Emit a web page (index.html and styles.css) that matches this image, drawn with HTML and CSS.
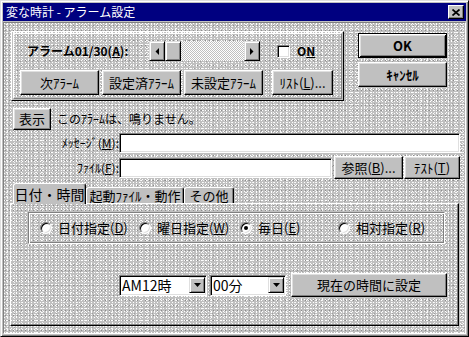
FILE: index.html
```html
<!DOCTYPE html>
<html lang="ja">
<head>
    <meta charset="UTF-8">
    <title>変な時計 - アラーム設定</title>
    <link rel="stylesheet" href="styles.css">
</head>
<body>
    <div class="window">
        <div class="titlebar">
            <span class="title">変な時計 - アラーム設定</span>
            <span class="close-btn">
                <svg width="8" height="7" viewBox="0 0 8 7"><path d="M0.5 0.5L7.5 6.5M7.5 0.5L0.5 6.5" stroke="#000" stroke-width="1.7" fill="none"/></svg>
            </span>
        </div>

        <div class="client">
            <div class="top-row">
                <div class="group">
                    <div class="group-in">
                        <div class="alarm-row">
                            <span class="alarm-label">アラーム01/30(<u>A</u>):</span>
                            <div class="scrollbar">
                                <span class="sb-btn"><svg width="4" height="7" viewBox="0 0 4 7"><polygon points="4,0 0.5,3.5 4,7" fill="#000"/></svg></span>
                                <span class="sb-thumb"></span>
                                <span class="sb-track"></span>
                                <span class="sb-btn"><svg width="4" height="7" viewBox="0 0 4 7"><polygon points="0,0 3.5,3.5 0,7" fill="#000"/></svg></span>
                            </div>
                            <span class="checkbox"></span>
                            <span class="on-label">O<u>N</u></span>
                        </div>
                        <div class="btn-row">
                            <div class="btn btn-group">次ｱﾗｰﾑ</div>
                            <div class="btn btn-group">設定済ｱﾗｰﾑ</div>
                            <div class="btn btn-group">未設定ｱﾗｰﾑ</div>
                            <div class="btn btn-list">ﾘｽﾄ(<u>L</u>)...</div>
                        </div>
                    </div>
                </div>
                <div class="side">
                    <div class="btn btn-side btn-default">OK</div>
                    <div class="btn btn-side">ｷｬﾝｾﾙ</div>
                </div>
            </div>

            <div class="info-row">
                <div class="btn btn-show">表示</div>
                <span class="info-text">このｱﾗｰﾑは、鳴りません。</span>
            </div>

            <div class="field-row">
                <span class="field-label">ﾒｯｾｰｼﾞ(<u>M</u>):</span>
                <span class="input input-msg"></span>
            </div>

            <div class="field-row file-row">
                <span class="field-label">ﾌｧｲﾙ(<u>F</u>):</span>
                <span class="input input-file"></span>
                <div class="btn btn-browse">参照(<u>B</u>)...</div>
                <div class="btn btn-test">ﾃｽﾄ(<u>T</u>)</div>
            </div>

            <div class="tabs-area">
                <div class="tabstrip">
                    <div class="tab tab-active">日付・時間</div>
                    <div class="tab tab-start">起動ﾌｧｲﾙ・動作</div>
                    <div class="tab tab-other">その他</div>
                </div>
                <div class="panel">
                    <div class="radio-group">
                        <label class="radio-item item-1"><span class="radio"></span>日付指定(<u>D</u>)</label>
                        <label class="radio-item item-2"><span class="radio"></span>曜日指定(<u>W</u>)</label>
                        <label class="radio-item item-3"><span class="radio checked"></span>毎日(<u>E</u>)</label>
                        <label class="radio-item"><span class="radio"></span>相対指定(<u>R</u>)</label>
                    </div>
                    <div class="time-row">
                        <div class="select select-hour">
                            <span class="select-text">AM12時</span>
                            <span class="sel-btn"><svg width="7" height="4" viewBox="0 0 7 4"><polygon points="0,0 7,0 3.5,4" fill="#000"/></svg></span>
                        </div>
                        <div class="select select-min">
                            <span class="select-text">00分</span>
                            <span class="sel-btn"><svg width="7" height="4" viewBox="0 0 7 4"><polygon points="0,0 7,0 3.5,4" fill="#000"/></svg></span>
                        </div>
                        <div class="btn btn-now">現在の時間に設定</div>
                    </div>
                </div>
            </div>
        </div>
    </div>
</body>
</html>
```

FILE: styles.css
```css
body {
    margin: 0;
    padding: 0;
    background: #c0c0c0;
    font-family: "Noto Sans CJK JP", "Liberation Sans", sans-serif;
    font-size: 12px;
    line-height: 14px;
    color: #000;
}
u {
    text-decoration: underline;
    text-underline-offset: 1px;
}
.window {
    width: 469px;
    height: 337px;
    box-sizing: border-box;
    display: flex;
    flex-direction: column;
    padding: 2px;
    background: #c0c0c0;
    border: 1px solid;
    border-color: #dfdfdf #000 #000 #dfdfdf;
    box-shadow: inset 1px 1px #fff, inset -1px -1px #808080;
}
.titlebar {
    height: 18px;
    display: flex;
    align-items: center;
    background: #000080;
    color: #fff;
    padding-left: 3px;
}
.title {
    font-size: 12px;
    flex: 1;
}
.close-btn {
    width: 16px;
    height: 14px;
    box-sizing: border-box;
    margin-right: 2px;
    display: flex;
    align-items: center;
    justify-content: center;
    background: #c0c0c0;
    border: 1px solid;
    border-color: #fff #000 #000 #fff;
    box-shadow: inset -1px -1px #808080;
}

/* 模様入りの背景 */
.client {
    flex: 1;
    margin-top: 1px;
    border: 1px solid;
    border-color: #808080 #fff #fff #808080;
    background-color: #c0c0c0;
    background-image:
        conic-gradient(at 1px 1px, transparent 75%, #fff 0),
        conic-gradient(at 1px 1px, transparent 75%, #fff 0),
        conic-gradient(at 1px 1px, transparent 75%, #8c8c8c 0),
        conic-gradient(at 1px 1px, transparent 75%, #f0f0f0 0),
        conic-gradient(at 1px 1px, transparent 75%, #a0a0a0 0);
    background-size: 3px 3px, 5px 4px, 4px 5px, 7px 2px, 6px 7px;
    background-position: 0 0, 2px 1px, 1px 2px, 3px 1px, 4px 3px;
}

.btn {
    box-sizing: border-box;
    display: flex;
    align-items: center;
    justify-content: center;
    background: #c0c0c0;
    border: 1px solid;
    border-color: #fff #000 #000 #fff;
    box-shadow: inset -1px -1px #808080, inset 1px 1px #dfdfdf;
    font-size: 13px;
    white-space: nowrap;
}

.top-row {
    display: flex;
    margin: 8px 0 0 7px;
    height: 70px;
}
.group {
    width: 333px;
    box-sizing: border-box;
    border: 1px solid;
    border-color: #fff #000 #000 #fff;
    padding: 1px;
}
.group-in {
    height: 100%;
    box-sizing: border-box;
    border: 1px solid;
    border-color: #fff #808080 #808080 #fff;
}
.alarm-row {
    display: flex;
    align-items: center;
    height: 20px;
    margin-top: 7px;
    padding-left: 13px;
}
.alarm-label {
    width: 122px;
    font-weight: bold;
}
.scrollbar {
    display: flex;
    width: 111px;
    height: 20px;
}
.sb-btn, .sb-thumb {
    width: 16px;
    box-sizing: border-box;
    display: flex;
    align-items: center;
    justify-content: center;
    background: #c0c0c0;
    border: 1px solid;
    border-color: #dfdfdf #000 #000 #dfdfdf;
    box-shadow: inset 1px 1px #fff, inset -1px -1px #808080;
}
.sb-track {
    flex: 1;
    background: repeating-conic-gradient(#fff 0 25%, #c0c0c0 0 50%) 0 0 / 2px 2px;
}
.checkbox {
    width: 13px;
    height: 13px;
    box-sizing: border-box;
    margin-left: 17px;
    background: #fff;
    border: 1px solid;
    border-color: #808080 #fff #fff #808080;
    box-shadow: inset 1px 1px #000, inset -1px -1px #dfdfdf;
}
.on-label {
    margin-left: 7px;
    font-weight: bold;
}
.btn-row {
    display: flex;
    gap: 3px;
    margin-top: 9px;
    padding-left: 6px;
}
.btn-group {
    width: 79px;
    height: 25px;
}
.btn-list {
    width: 61px;
    height: 25px;
    margin-left: 6px;
}
.side {
    display: flex;
    flex-direction: column;
    gap: 4px;
    margin: 2px 0 0 14px;
}
.btn-side {
    width: 89px;
    height: 25px;
    font-weight: bold;
}
.btn-default {
    border-color: #000;
    box-shadow: inset 1px 1px #fff, inset -1px -1px #000, inset 2px 2px #dfdfdf, inset -2px -2px #808080;
}

.info-row {
    display: flex;
    align-items: center;
    margin: 7px 0 0 9px;
}
.btn-show {
    width: 38px;
    height: 22px;
}
.info-text {
    margin-left: 6px;
}
.field-row {
    display: flex;
    align-items: center;
    margin-top: 3px;
}
.file-row {
    height: 23px;
    margin-top: 3px;
}
.field-label {
    width: 115px;
    text-align: right;
    padding-right: 0;
}
.input {
    height: 20px;
    box-sizing: border-box;
    background: #fff;
    border: 1px solid;
    border-color: #808080 #fff #fff #808080;
    box-shadow: inset 1px 1px #000, inset -1px -1px #dfdfdf;
}
.input-msg {
    width: 341px;
}
.input-file {
    width: 213px;
}
.btn-browse {
    width: 69px;
    height: 23px;
    margin-left: 2px;
}
.btn-test {
    width: 56px;
    height: 23px;
    margin-left: 1px;
}

.tabs-area {
    margin: 4px 0 0 6px;
}
.tabstrip {
    position: relative;
    z-index: 1;
    display: flex;
    align-items: flex-end;
    height: 20px;
    padding-left: 3px;
}
.tab {
    box-sizing: border-box;
    height: 16px;
    display: flex;
    align-items: center;
    justify-content: center;
    background: #c0c0c0;
    border: 1px solid;
    border-bottom: none;
    border-color: #fff #000 transparent #fff;
    border-radius: 3px 3px 0 0;
    box-shadow: inset -1px 0 #808080;
    font-size: 13px;
}
.tab-active {
    width: 73px;
    height: 21px;
    margin-bottom: -1px;
    font-size: 14px;
}
.tab-start {
    width: 98px;
}
.tab-other {
    width: 50px;
}
.panel {
    width: 449px;
    height: 123px;
    box-sizing: border-box;
    border: 1px solid;
    border-color: #fff #000 #000 #fff;
    box-shadow: inset -1px -1px #808080;
    padding: 8px 0 0 17px;
}
.radio-group {
    width: 417px;
    height: 32px;
    box-sizing: border-box;
    display: flex;
    align-items: center;
    padding-left: 11px;
    border: 1px solid;
    border-color: #808080 #fff #fff #808080;
    box-shadow: inset 1px 1px #fff, inset -1px -1px #808080;
}
.radio-item {
    display: flex;
    align-items: center;
    font-size: 13px;
}
.item-1 {
    width: 99px;
}
.item-2 {
    width: 101px;
}
.item-3 {
    width: 98px;
}
.radio {
    position: relative;
    width: 12px;
    height: 12px;
    box-sizing: border-box;
    margin-right: 6px;
    border-radius: 50%;
    background: #fff;
    border: 1px solid;
    border-color: #808080 #fff #fff #808080;
    box-shadow: inset 1px 1px #000, inset -1px -1px #dfdfdf;
}
.radio.checked::after {
    content: "";
    position: absolute;
    left: 3px;
    top: 3px;
    width: 4px;
    height: 4px;
    border-radius: 50%;
    background: #000;
}
.time-row {
    display: flex;
    align-items: center;
    height: 24px;
    margin: 29px 0 0 91px;
}
.select {
    height: 21px;
    box-sizing: border-box;
    display: flex;
    align-items: center;
    background: #fff;
    border: 1px solid;
    border-color: #808080 #fff #fff #808080;
    box-shadow: inset 1px 1px #000, inset -1px -1px #dfdfdf;
    font-size: 14px;
}
.select-hour {
    width: 88px;
}
.select-min {
    width: 76px;
    margin-left: 3px;
}
.select-text {
    flex: 1;
    padding-left: 2px;
}
.sel-btn {
    width: 16px;
    height: 16px;
    box-sizing: border-box;
    margin-right: 1px;
    display: flex;
    align-items: center;
    justify-content: center;
    background: #c0c0c0;
    border: 1px solid;
    border-color: #dfdfdf #000 #000 #dfdfdf;
    box-shadow: inset 1px 1px #fff, inset -1px -1px #808080;
}
.btn-now {
    width: 156px;
    height: 24px;
    margin-left: 5px;
}
```
